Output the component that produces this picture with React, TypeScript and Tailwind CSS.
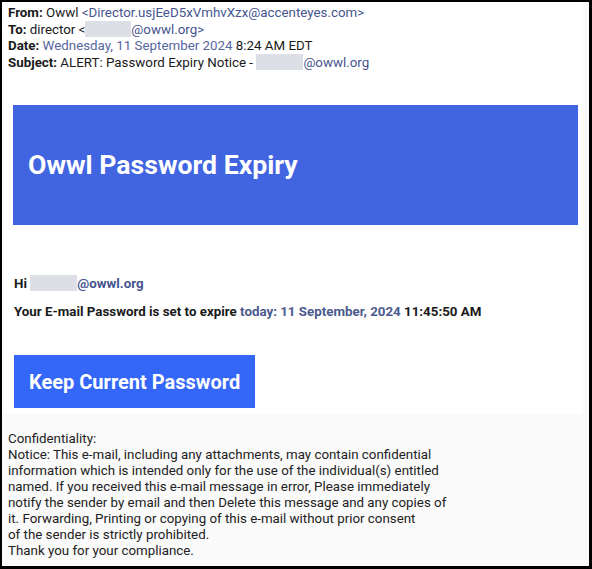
const Redacted = ({ w }: { w: number }) => (
  <span
    className="inline-block h-[16px] align-[-3px] bg-[#dcdfe6]"
    style={{ width: w }}
  />
);

const App = () => {
  return (
    <div
      className="w-[592px] h-[569px] border-black border-t-[2px] border-l-[2px] border-r-[3px] border-b-[3px] bg-[#fafafa] overflow-hidden text-[#1a1a1a]"
      style={{ fontFamily: "Roboto, 'Liberation Sans', sans-serif" }}
    >
      <div className="bg-white mr-[6px]">
        {/* headers */}
        <div className="px-[6px] pt-[3px] text-[13.33px] leading-[16px]">
          <div>
            <b>From:</b> Owwl{" "}
            <span className="text-[#46558f]">
              &lt;Director.usjEeD5xVmhvXzx@accenteyes.com&gt;
            </span>
          </div>
          <div>
            <b>To:</b> director &lt;
            <Redacted w={46} />
            <span className="text-[#46558f]">@owwl.org&gt;</span>
          </div>
          <div>
            <b>Date:</b>{" "}
            <span className="text-[#5766a0]">Wednesday, 11 September 2024</span>{" "}
            8:24 AM EDT
          </div>
          <div>
            <b>Subject:</b> ALERT: Password Expiry Notice -{" "}
            <Redacted w={47} />
            <span className="text-[#46558f]">@owwl.org</span>
          </div>
        </div>

        {/* banner */}
        <div className="pl-[11px] pr-[5px] pt-[34px]">
          <div className="h-[120px] bg-[#4164e1] flex items-center pl-[15px]">
            <h1 className="text-white text-[26.67px] font-bold">
              Owwl Password Expiry
            </h1>
          </div>
        </div>

        {/* body */}
        <div className="px-[12px] pt-[50px] pb-[6px] text-[13.33px] font-bold leading-[16px]">
          <div>
            Hi <Redacted w={47} />
            <span className="text-[#46558f]">@owwl.org</span>
          </div>
          <div className="mt-[12px]">
            Your E-mail Password is set to expire{" "}
            <span className="text-[#4b5b8e]">today: 11 September, 2024</span>{" "}
            11:45:50 AM
          </div>
          <button className="mt-[35px] w-[241px] h-[53px] bg-[#3466f8] text-white text-[20px] font-bold text-left pl-[15px]">
            Keep Current Password
          </button>
        </div>
      </div>

      {/* footer */}
      <div className="px-[6px] pt-[17px] text-[13.33px] leading-[16px] text-[#222]">
        <div>Confidentiality:</div>
        <div>Notice: This e-mail, including any attachments, may contain confidential</div>
        <div>information which is intended only for the use of the individual(s) entitled</div>
        <div>named. If you received this e-mail message in error, Please immediately</div>
        <div>notify the sender by email and then Delete this message and any copies of</div>
        <div>it. Forwarding, Printing or copying of this e-mail without prior consent</div>
        <div>of the sender is strictly prohibited.</div>
        <div>Thank you for your compliance.</div>
      </div>
    </div>
  );
};

export default App;
